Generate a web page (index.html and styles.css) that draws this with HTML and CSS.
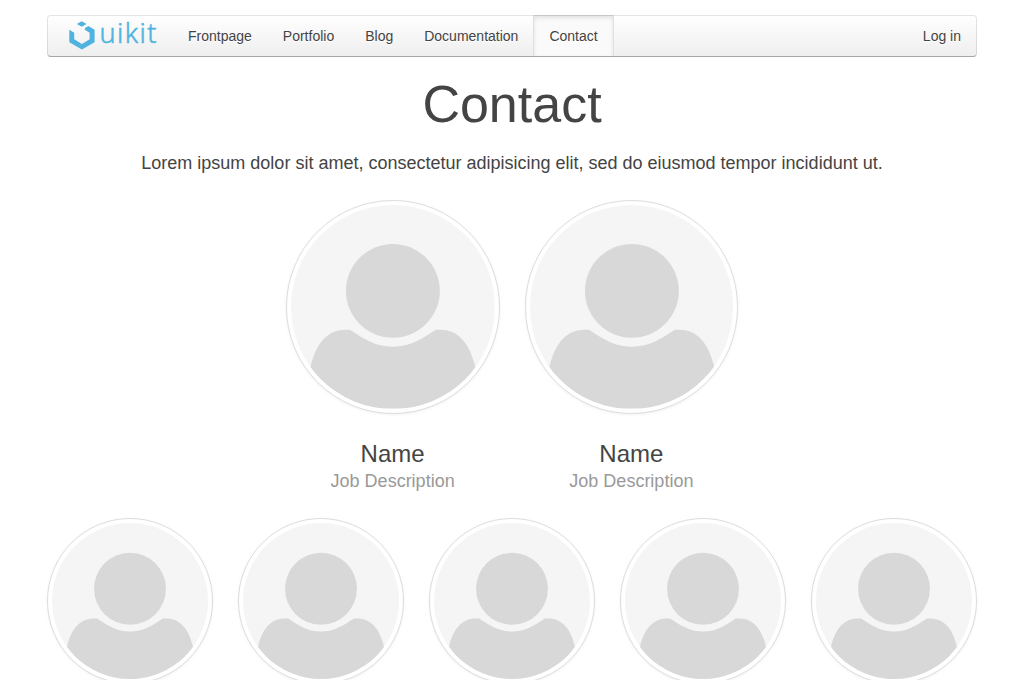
FILE: index.html
```html
<!DOCTYPE html>
<html lang="en">
<head>
<meta charset="utf-8">
<title>Contact</title>
<link rel="stylesheet" href="styles.css">
</head>
<body>
<svg class="symbols" width="0" height="0" aria-hidden="true">
  <symbol id="avatar" viewBox="0 0 204 204">
    <rect width="204" height="204" fill="#f5f5f5"/>
    <circle cx="102" cy="86" r="47" fill="#d8d8d8"/>
    <path fill="#d8d8d8" d="M59 125C73 134 84 142 102 142S131 134 145 125C165 123 178 135 184.500 162L190 204H14L19.500 162C26 135 39 123 59 125Z"/>
  </symbol>
</svg>
<div class="container">
  <nav class="navbar">
    <a class="brand">
      <svg width="90" height="38" viewBox="0 0 90 38">
        <g fill="#50b3df">
          <path d="M7.800 7.900 12.700 5.200 17.600 7.900 12.700 10.700Z"/>
          <path d="M.3 13.800 5.200 16.800V23.200L12.900 27.900 20.600 23.200V16.700L15.800 13.800 16 11.900 19.400 10 25.600 13.800V26.200L12.900 33.500.3 26.200Z"/>
          <text class="logo-text" x="30.500" y="27.200" textLength="57">uikit</text>
        </g>
      </svg>
    </a>
    <ul class="nav">
      <li><a>Frontpage</a></li>
      <li><a>Portfolio</a></li>
      <li><a>Blog</a></li>
      <li><a>Documentation</a></li>
      <li class="active"><a>Contact</a></li>
    </ul>
    <ul class="nav nav-right"><li><a>Log in</a></li></ul>
  </nav>
  <header>
    <h1>Contact</h1>
    <p class="lead">Lorem ipsum dolor sit amet, consectetur adipisicing elit, sed do eiusmod tempor incididunt ut.</p>
  </header>
  <div class="featured">
    <div class="person">
      <div class="thumb"><svg><use href="#avatar"/></svg></div>
      <h2>Name</h2>
      <p class="job">Job Description</p>
    </div>
    <div class="person">
      <div class="thumb"><svg><use href="#avatar"/></svg></div>
      <h2>Name</h2>
      <p class="job">Job Description</p>
    </div>
  </div>
  <div class="team">
    <div class="thumb"><svg><use href="#avatar"/></svg></div>
    <div class="thumb"><svg><use href="#avatar"/></svg></div>
    <div class="thumb"><svg><use href="#avatar"/></svg></div>
    <div class="thumb"><svg><use href="#avatar"/></svg></div>
    <div class="thumb"><svg><use href="#avatar"/></svg></div>
  </div>
</div>
</body>
</html>
```
FILE: styles.css
```css
* { box-sizing: border-box; }
html { height: 100%; overflow: hidden; background: #fff; }
body {
  margin: 0;
  height: 100%;
  overflow: hidden;
  font: 14px/20px "Liberation Sans", Arial, sans-serif;
  color: #444;
}
.symbols { display: none; }
.container { width: 930px; margin: 0 auto; padding-top: 15px; }
.navbar {
  display: flex;
  height: 42px;
  border: 1px solid rgba(0, 0, 0, .1);
  border-bottom-color: rgba(0, 0, 0, .3);
  border-radius: 4px;
  background: linear-gradient(to bottom, #fff, #eee) border-box;
}
.brand { width: 105px; padding: 0 0 0 21px; margin-right: 20px; }
.brand svg { display: block; overflow: visible; }
.logo-text {
  font-family: "Noto Sans", sans-serif;
  font-size: 27px;
  font-weight: 300;
  stroke: #50b3df;
  stroke-width: .5px;
}
.nav { display: flex; margin: 0; padding: 0; list-style: none; }
.nav-right { margin-left: auto; }
.nav a {
  display: block;
  height: 41px;
  margin: -1px 0 0 -1px;
  padding: 0 15px;
  border: 1px solid transparent;
  border-bottom: 0;
  line-height: 40px;
  text-shadow: 0 1px 0 #fff;
}
.nav-right a { padding-right: 14px; }
.active a {
  background: #fafafa;
  border-color: rgba(0, 0, 0, .1);
  border-top-color: rgba(0, 0, 0, .2);
  box-shadow: inset 0 2px 4px rgba(0, 0, 0, .1);
}
header { text-align: center; }
h1, h2, p { margin: 0; font-weight: normal; }
h1 { margin-top: 15px; font-size: 52px; line-height: 64px; }
.lead { margin-top: 15px; font-size: 18px; line-height: 24px; }
.featured, .team { display: flex; justify-content: center; gap: 25px; }
.featured { margin-top: 25px; }
.person { width: 213.75px; text-align: center; }
.thumb {
  aspect-ratio: 1;
  padding: 4px;
  border: 1px solid #ddd;
  border-radius: 50%;
  background: #fff;
  box-shadow: 0 1px 3px rgba(0, 0, 0, .05);
}
.thumb svg { display: block; width: 100%; height: 100%; border-radius: 50%; }
h2 { margin-top: 25px; font-size: 24px; line-height: 30px; }
.job { font-size: 18px; line-height: 24px; color: #999; }
.team { margin-top: 25px; }
.team .thumb { width: 166px; }
```
